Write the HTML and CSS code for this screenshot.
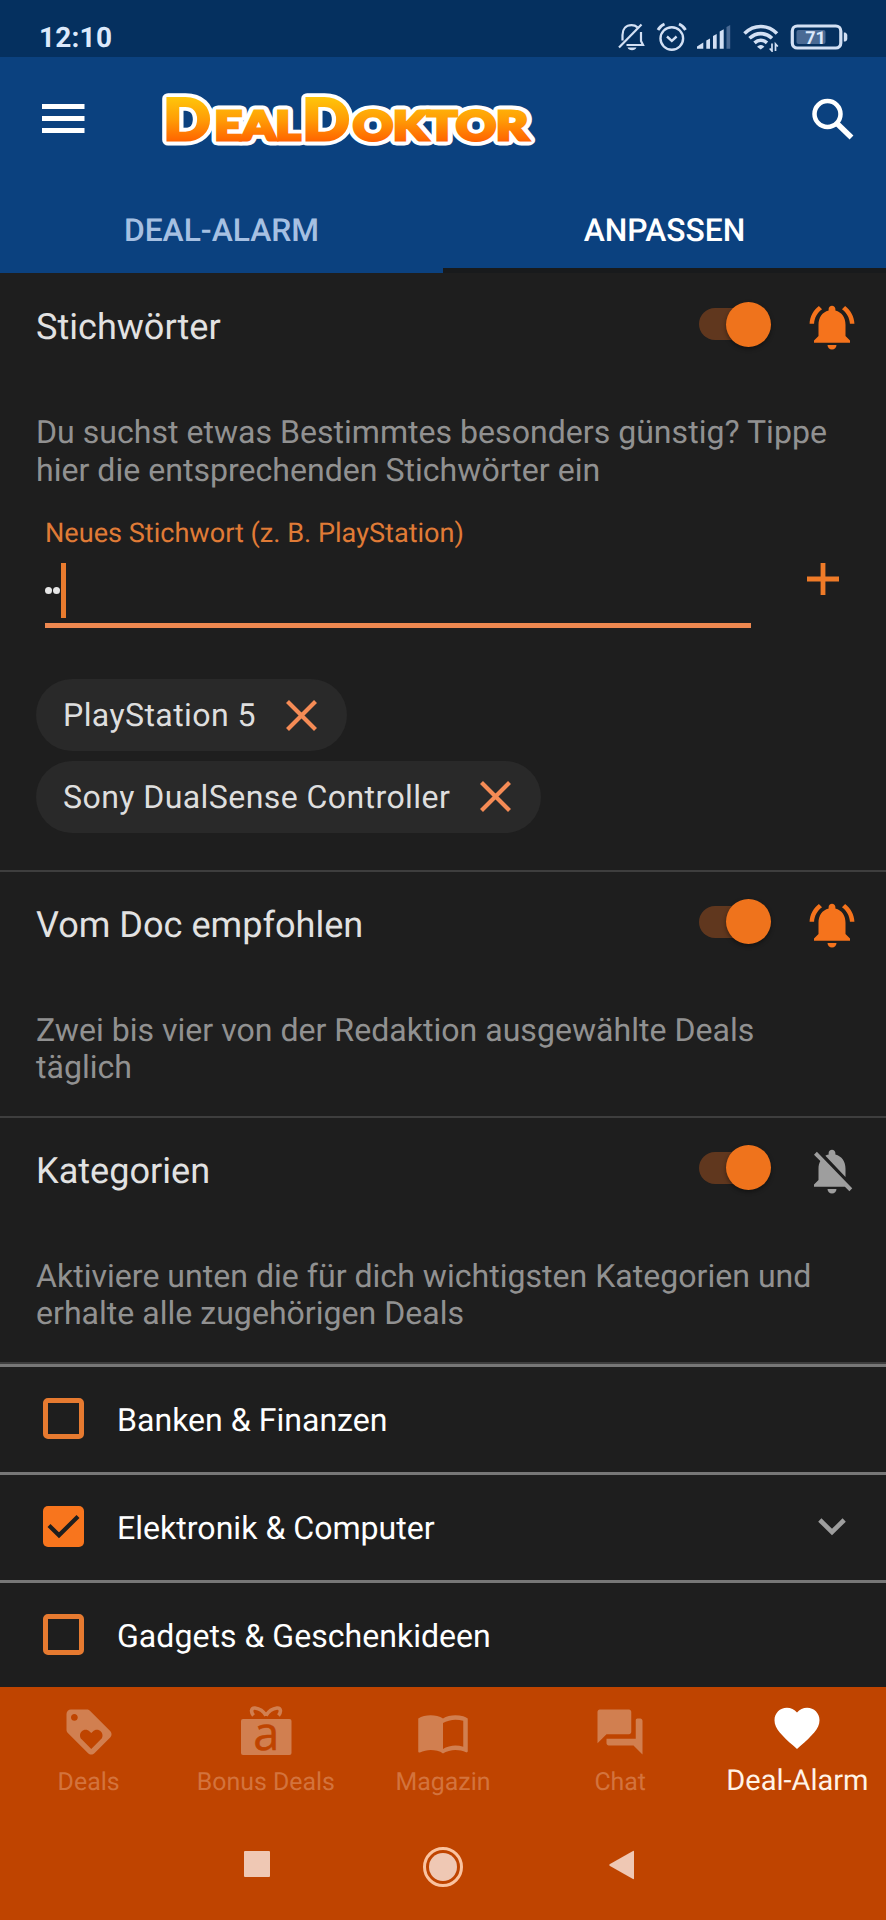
FILE: index.html
```html
<!DOCTYPE html>
<html lang="de">
<head>
<meta charset="utf-8">
<title>DealDoktor – Deal-Alarm</title>
<link rel="stylesheet" href="styles.css">
</head>
<body>
<svg class="defs" width="0" height="0" aria-hidden="true">
  <symbol id="bell-on" viewBox="0 0 24 24">
    <path d="M7.58 4.08 6.15 2.65C3.75 4.48 2.17 7.3 2.03 10.5h2c.15-2.65 1.51-4.97 3.55-6.42zm12.39 6.42h2c-.15-3.2-1.73-6.02-4.12-7.85l-1.42 1.43c2.02 1.45 3.39 3.77 3.54 6.42zM18 11c0-3.07-1.64-5.64-4.5-6.32V4c0-.83-.67-1.5-1.5-1.5s-1.5.67-1.5 1.5v.68C7.63 5.36 6 7.92 6 11v5l-2 2v1h16v-1l-2-2v-5zm-6 11c1.1 0 2-.9 2-2h-4c0 1.1.9 2 2 2z"/>
  </symbol>
  <symbol id="bell-off" viewBox="0 0 24 24">
    <path d="M20 18.69 7.84 6.14 5.27 3.49 4 4.76l2.8 2.8v.01c-.52.99-.8 2.16-.8 3.42v5l-2 2v1h13.73l2 2L21 19.72l-1-1.03zM12 22c1.11 0 2-.89 2-2h-4c0 1.11.89 2 2 2zm6-7.32V11c0-3.08-1.64-5.64-4.5-6.32V4c0-.83-.67-1.5-1.5-1.5s-1.5.67-1.5 1.5v.68c-.15.03-.29.08-.42.12-.1.03-.2.07-.3.11h-.01c-.01 0-.01 0-.02.01-.23.09-.46.2-.68.31 0 0-.01 0-.01.01L18 14.68z"/>
  </symbol>
</svg>

<div class="screen">
  <div class="status-bar">
    <span class="clock">12:10</span>
    <div class="status-icons">
      <svg width="32" height="32" viewBox="616 20 32 32" fill="none" stroke="#d3e0f4" stroke-width="2.2">
        <path d="M622.5 40.5V35c0-6 3.500-9.800 9-9.800 2.500 0 4.500.8 6 2.200M641 32v9l2 4H626.500"/>
        <path d="M619 47.500 641.500 24.500"/>
        <path d="M627.500 47.500h9c-.8 1.800-2.300 2.800-4.500 2.800s-3.700-1-4.500-2.800z" fill="#d3e0f4" stroke="none"/>
      </svg>
      <svg width="32" height="32" viewBox="656 20 32 32" fill="none" stroke="#d3e0f4" stroke-width="2.400">
        <circle cx="671.800" cy="38.500" r="11.300"/>
        <path d="m667 36.500 4.800 4.300 4.800-4.300"/>
        <path d="M658 30q2-4 6.500-6M685.500 30q-2-4-6.500-6" stroke-width="2.800"/>
      </svg>
      <svg width="36" height="32" viewBox="696 20 36 32" fill="#d3e0f4">
        <path d="m697 48.800v-2.300l6.300-4v6.300z"/>
        <path d="M706.300 48.800v-8.300l3.700-2v10.300zM713 48.800V36l3.700-2v14.800zM719.700 48.800V31.500l4-2.300v19.600z"/>
        <path d="M726.500 48.800V27l3.700-2v23.800z" fill="#4a6a94"/>
      </svg>
      <svg width="40" height="32" viewBox="740 20 40 32" fill="none" stroke="#d3e0f4" stroke-width="3.600">
        <path d="M744.500 33.500c9.500-9.300 23-9.300 32.500 0"/>
        <path d="M749.500 38.300c6.800-6.300 15.700-6.300 22.500 0"/>
        <path d="M754.500 42.800c3.800-3.300 8.700-3.300 12.500 0"/>
        <path d="m760.700 49.500-3.700-2.700q3.700-3.600 7.400 0z" fill="#d3e0f4" stroke="none"/>
        <path d="M772 43.500v7.500l-2.300-2.500M775.500 51v-7l2.300 2.500" stroke-width="1.700"/>
      </svg>
      <svg width="62" height="32" viewBox="788 20 62 32">
        <rect x="792.300" y="26" width="48.500" height="22" rx="5" fill="none" stroke="#d3e0f4" stroke-width="3.200"/>
        <rect x="796.500" y="30" width="29" height="14" rx="2" fill="#4a6a94"/>
        <path d="M843.800 32.500h1.500q2 1 2 2.500v4q0 1.500-2 2.500h-1.500z" fill="#d3e0f4"/>
        <text class="battery-level" x="815.500" y="44.200" text-anchor="middle">71</text>
      </svg>
    </div>
  </div>

  <header class="app-bar">
    <svg class="menu" width="43" height="30" viewBox="0 0 43 30" fill="#fff"><path d="M0 0h42.500v5H0zM0 12h42.500v5H0zM0 24h42.500v5H0z"/></svg>
    <svg class="logo" width="400" height="123" viewBox="150 57 400 123">
      <defs>
        <linearGradient id="flame" gradientUnits="userSpaceOnUse" x1="0" y1="97" x2="0" y2="142">
          <stop offset="0" stop-color="#ffc60a"/><stop offset=".5" stop-color="#ff9d06"/><stop offset="1" stop-color="#ff6200"/>
        </linearGradient>
      </defs>
      <g class="logo-outline">
        <text class="logo-big" x="163.500" y="139.500" textLength="47" lengthAdjust="spacingAndGlyphs">D</text>
        <text class="logo-small" x="214.500" y="139.500" textLength="86" lengthAdjust="spacingAndGlyphs">EAL</text>
        <text class="logo-big" x="302.500" y="139.500" textLength="47" lengthAdjust="spacingAndGlyphs">D</text>
        <text class="logo-small" x="353" y="139.500" textLength="175" lengthAdjust="spacingAndGlyphs">OKTOR</text>
      </g>
      <g class="logo-fill" aria-hidden="true">
        <text class="logo-big" x="163.500" y="139.500" textLength="47" lengthAdjust="spacingAndGlyphs">D</text>
        <text class="logo-small" x="214.500" y="139.500" textLength="86" lengthAdjust="spacingAndGlyphs">EAL</text>
        <text class="logo-big" x="302.500" y="139.500" textLength="47" lengthAdjust="spacingAndGlyphs">D</text>
        <text class="logo-small" x="353" y="139.500" textLength="175" lengthAdjust="spacingAndGlyphs">OKTOR</text>
      </g>
    </svg>
    <svg class="search" width="54" height="54" viewBox="0 0 54 54" fill="none" stroke="#fff">
      <circle cx="21.500" cy="22" r="13" stroke-width="4.500"/><path d="m31 31.500 14.500 14" stroke-width="5.500"/>
    </svg>
  </header>

  <nav class="tabs">
    <div class="tab"><span>DEAL-ALARM</span></div>
    <div class="tab tab-active"><span>ANPASSEN</span></div>
  </nav>

  <main class="content">
    <section class="section section-first">
      <div class="section-head">
        <h2>Stichwörter</h2>
        <span class="toggle"><i class="track"></i><i class="thumb"></i></span>
        <svg class="bell"><use href="#bell-on"/></svg>
      </div>
      <p class="hint">Du suchst etwas Bestimmtes besonders günstig? Tippe<br>hier die entsprechenden Stichwörter ein</p>
      <div class="keyword-form">
        <div class="field">
          <label><span>Neues Stichwort (z. B. PlayStation)</span></label>
          <div class="input"><i class="dot"></i><i class="dot"></i><i class="caret"></i></div>
        </div>
        <svg class="add" width="32" height="32" viewBox="0 0 32 32" fill="#ef7b28"><path d="M13.600 0h4.800v13.600H32v4.800H18.400V32h-4.800V18.400H0v-4.800h13.600z"/></svg>
      </div>
      <div class="chips">
        <div class="chip"><span>PlayStation 5</span><svg width="31" height="31" viewBox="0 0 31 31"><path d="m1.500 1.500 28 28m0-28-28 28" stroke="#f58b55" stroke-width="4.200"/></svg></div>
        <div class="chip"><span>Sony DualSense Controller</span><svg width="31" height="31" viewBox="0 0 31 31"><path d="m1.500 1.500 28 28m0-28-28 28" stroke="#f58b55" stroke-width="4.200"/></svg></div>
      </div>
    </section>

    <section class="section">
      <div class="section-head">
        <h2>Vom Doc empfohlen</h2>
        <span class="toggle"><i class="track"></i><i class="thumb"></i></span>
        <svg class="bell"><use href="#bell-on"/></svg>
      </div>
      <p class="hint">Zwei bis vier von der Redaktion ausgewählte Deals<br>täglich</p>
    </section>

    <section class="section">
      <div class="section-head">
        <h2>Kategorien</h2>
        <span class="toggle"><i class="track"></i><i class="thumb"></i></span>
        <svg class="bell bell-muted"><use href="#bell-off"/></svg>
      </div>
      <p class="hint">Aktiviere unten die für dich wichtigsten Kategorien und<br>erhalte alle zugehörigen Deals</p>
    </section>

    <div class="category"><span class="checkbox"></span><span class="category-name">Banken &amp; Finanzen</span></div>
    <div class="category">
      <span class="checkbox checked"><svg width="41" height="41" viewBox="0 0 41 41" fill="none" stroke="#1e1e1e" stroke-width="4.200"><path d="m6 19.500 10 9.800L35 10.500"/></svg></span>
      <span class="category-name">Elektronik &amp; Computer</span>
      <svg class="chevron" width="28" height="18" viewBox="0 0 28 18" fill="none" stroke="#9e9e9e" stroke-width="4.600"><path d="m1.800 2 12.200 12L26.200 2"/></svg>
    </div>
    <div class="category"><span class="checkbox"></span><span class="category-name">Gadgets &amp; Geschenkideen</span></div>
  </main>

  <nav class="bottom-nav">
    <div class="nav-item">
      <svg viewBox="0 0 24 24"><path fill-rule="evenodd" d="m21.410 11.580-9-9C12.050 2.220 11.550 2 11 2H4c-1.100 0-2 .9-2 2v7c0 .55.22 1.050.59 1.420l9 9c.36.36.86.58 1.410.58s1.050-.22 1.410-.59l7-7c.37-.36.59-.86.59-1.410s-.23-1.060-.59-1.420zM5.500 7C4.670 7 4 6.330 4 5.500S4.670 4 5.500 4 7 4.670 7 5.500 6.330 7 5.500 7zm11.770 8.270L13 19.540l-4.270-4.270C8.280 14.810 8 14.190 8 13.500c0-1.380 1.120-2.500 2.500-2.500.69 0 1.320.28 1.770.74l.73.72.73-.73c.45-.45 1.080-.73 1.770-.73 1.380 0 2.500 1.120 2.500 2.500 0 .69-.28 1.320-.73 1.770z"/></svg>
      <span>Deals</span>
    </div>
    <div class="nav-item">
      <svg class="gift" viewBox="239 1705 54 54">
        <rect x="241" y="1719" width="50.500" height="36" rx="2"/>
        <path d="M266 1715.500c-3-5-7-7-11-7.500-4-.3-4.500 4-1.500 7.500M266 1715.500c3-5 7-7 11-7.500 4-.3 4.500 4 1.500 7.500" fill="none" stroke="#d17f50" stroke-width="3.600"/>
        <text class="gift-letter" x="266.300" y="1749.700" text-anchor="middle">a</text>
      </svg>
      <span>Bonus Deals</span>
    </div>
    <div class="nav-item">
      <svg viewBox="0 0 24 24"><path fill-rule="evenodd" d="M21 5c-1.110-.35-2.330-.5-3.500-.5-1.950 0-4.050.4-5.500 1.500-1.450-1.100-3.550-1.500-5.500-1.500S2.450 4.900 1 6v14.650c0 .25.25.5.5.5.1 0 .15-.05.25-.05C3.100 20.450 5.050 20 6.500 20c1.950 0 4.050.4 5.500 1.500 1.350-.85 3.800-1.500 5.500-1.500 1.650 0 3.350.3 4.750 1.050.1.050.15.050.25.050.25 0 .5-.25.5-.5V6c-.6-.45-1.250-.75-2-1zm0 13.500c-1.100-.35-2.300-.5-3.500-.5-1.700 0-4.150.65-5.500 1.500V8c1.350-.85 3.800-1.500 5.500-1.500 1.200 0 2.400.15 3.500.5v11.500z"/></svg>
      <span>Magazin</span>
    </div>
    <div class="nav-item">
      <svg viewBox="0 0 24 24"><path d="M21 6h-1.300a.7.7 0 0 0-.7.7V15H6v2c0 .55.45 1 1 1h11l4 4V7c0-.55-.45-1-1-1zm-4 6V3c0-.55-.45-1-1-1H3c-.55 0-1 .45-1 1v14l4-4h10c.55 0 1-.45 1-1z"/></svg>
      <span>Chat</span>
    </div>
    <div class="nav-item nav-active">
      <svg viewBox="0 0 24 24"><path d="m12 21.350-1.450-1.320C5.400 15.360 2 12.280 2 8.500 2 5.420 4.420 3 7.500 3c1.740 0 3.410.81 4.500 2.090C13.090 3.810 14.760 3 16.500 3 19.580 3 22 5.420 22 8.500c0 3.780-3.400 6.860-8.550 11.540L12 21.350z"/></svg>
      <span>Deal-Alarm</span>
    </div>
  </nav>

  <div class="system-nav">
    <svg class="sys-recent" width="26" height="26"><rect width="26" height="26" rx="1" fill="#efc8b4"/></svg>
    <svg class="sys-home" width="42" height="42"><circle cx="21" cy="21" r="18.500" fill="none" stroke="#fac3a0" stroke-width="3"/><circle cx="21" cy="21" r="14" fill="#efc8b4"/></svg>
    <svg class="sys-back" width="26" height="30" viewBox="0 0 26 30"><path d="M1 14 24 1q1-.5 1 .7v26.600q0 1.200-1 .7L1 16q-1.500-1 0-2z" fill="#efc8b4"/></svg>
  </div>
</div>
</body>
</html>
```
FILE: styles.css
```css
* { box-sizing: border-box; }

body {
  margin: 0;
  background: #1e1e1e;
  font-family: Roboto, "Noto Sans", sans-serif;
  text-rendering: geometricPrecision;
}

svg { display: block; flex: none; }
.defs { position: absolute; }

.screen {
  width: 886px;
  height: 1920px;
  overflow: hidden;
  display: flex;
  flex-direction: column;
}

/* Status bar */
.status-bar {
  height: 57px;
  padding: 20px 36px 0 39px;
  display: flex;
  justify-content: space-between;
  background: #05305f;
}
.clock {
  font-size: 28px;
  line-height: 36px;
  font-weight: 700;
  letter-spacing: 0.2px;
  color: #dce9fb;
}
.status-icons { display: flex; gap: 8px; }
.battery-level { font-size: 18px; font-weight: 700; fill: #dce9fb; }

/* App bar */
.app-bar {
  height: 123px;
  padding: 0 26px 0 42px;
  display: flex;
  align-items: center;
  background: #0b417f;
}
.logo { margin-left: 65px; }
.search { margin-left: auto; }
.logo-big, .logo-small { font-family: Lato, sans-serif; font-weight: 900; }
.logo-big { font-size: 57px; }
.logo-small { font-size: 40px; }
.logo-outline { fill: #fff; stroke: #fff; stroke-width: 11px; stroke-linejoin: round; }
.logo-fill { fill: url(#flame); stroke: url(#flame); stroke-width: 3.200px; }

/* Tabs */
.tabs { height: 93px; display: flex; background: #0b417f; }
.tab {
  flex: 1;
  padding-top: 31px;
  text-align: center;
  font-size: 31.800px;
  line-height: 38px;
  font-weight: 500;
  color: #a6c0e2;
}
.tab-active { color: #fff; border-bottom: 5px solid #181a1c; }

/* Alarm sections */
.content { height: 1414px; overflow: hidden; background: #1e1e1e; }
.section { border-bottom: 2.500px solid #3e3e3e; height: 246px; }
.section-first { height: 598.500px; padding-top: 1px; }
.section-head {
  height: 106px;
  padding: 0 27px 0 36px;
  display: flex;
  align-items: center;
}
h2 {
  flex: 1;
  margin: 0;
  font-size: 36.100px;
  line-height: 44px;
  font-weight: 400;
  color: #e2e2e2;
}
.toggle {
  margin: 0 34.500px 6px 0;
  display: flex;
  align-items: center;
}
.track {
  width: 56px;
  height: 32px;
  border-radius: 16px;
  background: #60371e;
}
.thumb {
  width: 45px;
  height: 45px;
  margin-left: -29px;
  border-radius: 50%;
  background: #ef731c;
  box-shadow: 0 2px 4px rgba(0, 0, 0, 0.4);
}
.bell { width: 54px; height: 54px; fill: #f5731c; }
.bell-muted { fill: #9e9e9e; }
.hint {
  margin: 34px 0 0;
  padding-left: 36px;
  font-size: 32.100px;
  line-height: 37.800px;
  white-space: nowrap;
  color: #919191;
}

/* Keyword entry */
.keyword-form { display: flex; margin: 27.600px 0 0 45px; }
.field { width: 706px; }
.field label {
  display: block;
  font-size: 27.100px;
  line-height: 32px;
  color: #e07b36;
}
.input {
  height: 79px;
  padding-top: 14px;
  display: flex;
  gap: 1px;
  border-bottom: 5px solid #ee8850;
}
.dot { width: 7px; height: 7px; margin-top: 24px; border-radius: 50%; background: #e6e6e6; }
.caret { width: 5px; height: 55px; background: #e97b2e; }
.add { margin: 46px 0 0 56px; }

.chips {
  margin: 51px 0 0 36px;
  display: flex;
  flex-direction: column;
  align-items: flex-start;
  gap: 9.500px;
}
.chip {
  height: 72px;
  padding: 0 30px 0 27px;
  display: flex;
  align-items: center;
  gap: 30px;
  border-radius: 36px;
  background: #292929;
  font-size: 32.100px;
  letter-spacing: 0.400px;
  color: #dedede;
}

/* Categories */
.category {
  height: 108.200px;
  padding: 0 40px 0 43px;
  display: flex;
  align-items: center;
  border-top: 3px solid #777;
}
.checkbox {
  width: 41px;
  height: 41px;
  margin: 0 33px 1px 0;
  border: 5px solid #e67a30;
  border-radius: 5px;
}
.checkbox.checked { border: 0; background: #f8751d; }
.category-name {
  padding-top: 1px;
  font-size: 32.100px;
  line-height: 38px;
  color: #fff;
}
.chevron { margin-left: auto; }

/* Bottom navigation */
.bottom-nav {
  height: 133px;
  padding-top: 18px;
  display: flex;
  background: #bf4400;
}
.nav-item {
  flex: 1;
  display: flex;
  flex-direction: column;
  align-items: center;
  font-size: 24.900px;
  line-height: 30px;
  white-space: nowrap;
  color: #d3733d;
}
.nav-item svg { width: 54px; height: 54px; margin-bottom: 9px; fill: #d17f50; }
.nav-item .gift { overflow: visible; }
.nav-item.nav-active { font-size: 29px; color: #fff3e6; }
.nav-item.nav-active svg { margin: -4px 0 11px; fill: #fff; }
.nav-item .gift-letter { font-family: "Open Sans", sans-serif; font-size: 47px; fill: #bf4400; stroke: #bf4400; stroke-width: 0.5px; }

/* System navigation */
.system-nav {
  height: 100px;
  padding: 26px 0 0 244px;
  display: flex;
  background: #bf4400;
}
.sys-recent { margin-top: 5px; }
.sys-home { margin-left: 152px; }
.sys-back { margin: 4px 0 0 145px; }
```
